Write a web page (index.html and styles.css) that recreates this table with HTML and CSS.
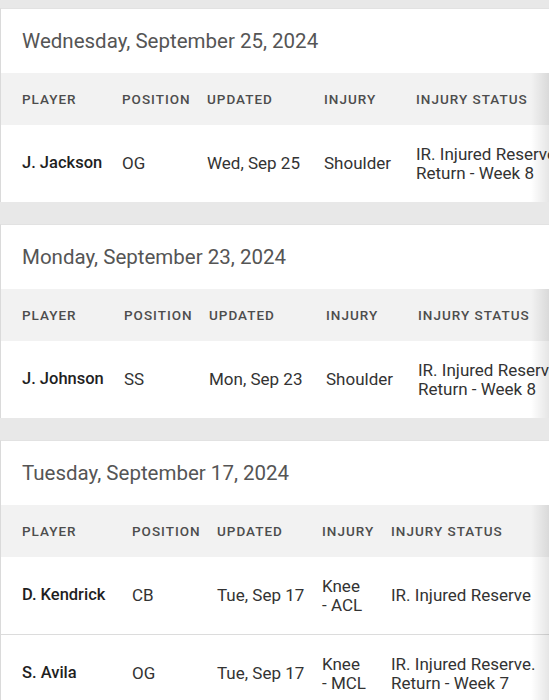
FILE: index.html
```html
<!DOCTYPE html>
<html lang="en">
<head>
<meta charset="utf-8">
<title>Injuries</title>
<link rel="stylesheet" href="styles.css">
</head>
<body>
<main class="page">
  <section class="card">
    <h2 class="card-title">Wednesday, September 25, 2024</h2>
    <div class="scroll">
      <table class="injuries t1">
        <colgroup><col class="c1"><col class="c2"><col class="c3"><col class="c4"><col class="c5"></colgroup>
        <thead>
          <tr><th>Player</th><th>Position</th><th>Updated</th><th>Injury</th><th>Injury Status</th></tr>
        </thead>
        <tbody>
          <tr><td class="name">J. Jackson</td><td class="nw">OG</td><td class="nw">Wed, Sep 25</td><td>Shoulder</td><td>IR. Injured Reserve. Return - Week 8</td></tr>
        </tbody>
      </table>
    </div>
  </section>
  <section class="card">
    <h2 class="card-title">Monday, September 23, 2024</h2>
    <div class="scroll">
      <table class="injuries t2">
        <colgroup><col class="c1"><col class="c2"><col class="c3"><col class="c4"><col class="c5"></colgroup>
        <thead>
          <tr><th>Player</th><th>Position</th><th>Updated</th><th>Injury</th><th>Injury Status</th></tr>
        </thead>
        <tbody>
          <tr><td class="name">J. Johnson</td><td class="nw">SS</td><td class="nw">Mon, Sep 23</td><td>Shoulder</td><td>IR. Injured Reserve. Return - Week 8</td></tr>
        </tbody>
      </table>
    </div>
  </section>
  <section class="card">
    <h2 class="card-title">Tuesday, September 17, 2024</h2>
    <div class="scroll">
      <table class="injuries t3">
        <colgroup><col class="c1"><col class="c2"><col class="c3"><col class="c4"><col class="c5"></colgroup>
        <thead>
          <tr><th>Player</th><th>Position</th><th>Updated</th><th>Injury</th><th>Injury Status</th></tr>
        </thead>
        <tbody>
          <tr><td class="name">D. Kendrick</td><td class="nw">CB</td><td class="nw">Tue, Sep 17</td><td>Knee <span class="keep">- ACL</span></td><td>IR. Injured Reserve</td></tr>
          <tr><td class="name">S. Avila</td><td class="nw">OG</td><td class="nw">Tue, Sep 17</td><td>Knee <span class="keep">- MCL</span></td><td>IR. Injured Reserve. Return - Week 7</td></tr>
        </tbody>
      </table>
    </div>
  </section>
</main>
</body>
</html>
```

FILE: styles.css
```css
* { box-sizing: border-box; }

html, body {
  margin: 0;
  padding: 0;
  background: #e8e8e8;
}

body {
  font-family: Roboto, "Noto Sans", "Liberation Sans", sans-serif;
  color: #333;
  overflow: hidden;
}

.page {
  padding-top: 8px;
  display: flex;
  flex-direction: column;
  gap: 22px;
}

.card {
  background: #fff;
  border-top: 1px solid #e2e2e2;
  border-left: 1px solid #dadada;
}

.card-title {
  margin: 0;
  padding: 20px 21px;
  font-size: 20.5px;
  line-height: 24px;
  font-weight: 400;
  color: #555;
}

.scroll {
  position: relative;
  overflow: hidden;
}

.scroll::after {
  content: "";
  position: absolute;
  top: 0;
  right: 0;
  bottom: 0;
  width: 18px;
  background: linear-gradient(to right, rgba(0,0,0,0), rgba(0,0,0,0.1));
}

.injuries {
  border-collapse: collapse;
  table-layout: fixed;
}

.t1 { width: 575px; }
.t2 { width: 577px; }
.t3 { width: 551px; }

.t1 .c1 { width: 111px; }
.t1 .c2 { width: 85px; }
.t1 .c3 { width: 117px; }
.t1 .c4 { width: 92px; }
.t1 .c5 { width: 170px; }

.t2 .c1 { width: 113px; }
.t2 .c2 { width: 85px; }
.t2 .c3 { width: 117px; }
.t2 .c4 { width: 92px; }
.t2 .c5 { width: 170px; }

.t3 .c1 { width: 121px; }
.t3 .c2 { width: 85px; }
.t3 .c3 { width: 105px; }
.t3 .c4 { width: 69px; }
.t3 .c5 { width: 171px; }

.injuries th {
  background: #f2f2f2;
  padding: 18px 10px;
  font-size: 13.5px;
  line-height: 16px;
  font-weight: 500;
  letter-spacing: 1px;
  text-transform: uppercase;
  text-align: left;
  color: #4d4d4d;
  white-space: nowrap;
  overflow: hidden;
}

.injuries td {
  padding: 20px 10px;
  font-size: 17px;
  line-height: 18.5px;
  vertical-align: middle;
  color: #333;
  text-align: left;
}

.injuries td.nw,
.injuries .keep {
  white-space: nowrap;
}

.injuries th:first-child,
.injuries td:first-child {
  padding-left: 21px;
}

.injuries tbody tr + tr td {
  border-top: 1px solid #dcdcdc;
}

.injuries td.name {
  font-size: 16.5px;
  font-weight: 500;
  color: #1f1f1f;
  white-space: nowrap;
}
```
